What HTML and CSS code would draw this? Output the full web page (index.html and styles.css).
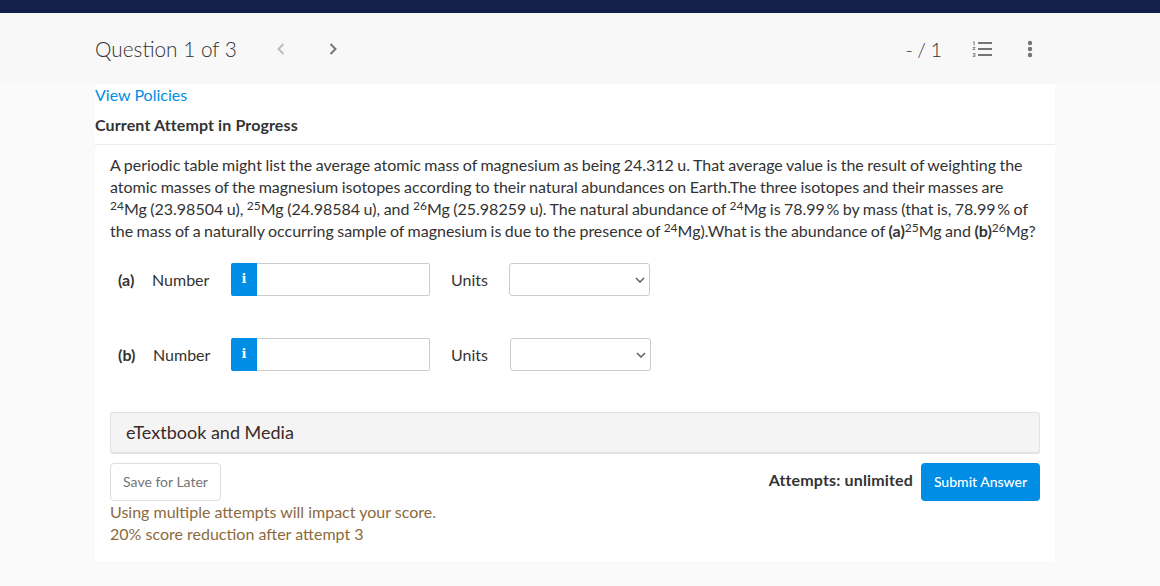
FILE: index.html
```html
<!DOCTYPE html>
<html lang="en">
<head>
<meta charset="utf-8">
<title>Question 1 of 3</title>
<link rel="stylesheet" href="styles.css">
</head>
<body>
<div class="topbar"></div>
<header class="qhead">
  <div class="qhead-inner">
    <h1 class="qtitle">Question 1 of 3</h1>
    <svg class="chev chev-off" width="10" height="14" viewBox="0 0 10 14"><path d="M7.5 2 2.5 7l5 5" fill="none" stroke="currentColor" stroke-width="2"/></svg>
    <svg class="chev chev-on" width="10" height="14" viewBox="0 0 10 14"><path d="M2.5 2l5 5-5 5" fill="none" stroke="currentColor" stroke-width="2"/></svg>
    <span class="score">- / 1</span>
    <svg class="list-icon" width="20" height="16" viewBox="0 0 20 16"><path d="M6 1h14v2H6zM6 7h14v2H6zM6 13h14v2H6z" fill="#757575"/><path d="M1 .5h1.600v4H1.700V1.400H1zM.7 6h2.600v.8L1.700 8.300h1.600V9H.7v-.7l1.600-1.600H.7zM.7 12h2.600v4H.7v-.7h1.800v-.9H1.200v-.6h1.300v-1H.7z" fill="#757575"/></svg>
    <svg class="dots-icon" width="6" height="18" viewBox="0 0 6 18"><circle cx="3" cy="3" r="2.200" fill="#757575"/><circle cx="3" cy="9" r="2.200" fill="#757575"/><circle cx="3" cy="15" r="2.200" fill="#757575"/></svg>
  </div>
</header>
<main class="card">
  <a class="policies" href="#">View Policies</a>
  <div class="attempt">Current Attempt in Progress</div>
  <div class="body">
    <p class="question">A periodic table might list the average atomic mass of magnesium as being 24.312 u. That average value is the result of weighting the atomic masses of the magnesium isotopes according to their natural abundances on Earth.The three isotopes and their masses are <sup>24</sup>Mg (23.98504 u), <sup>25</sup>Mg (24.98584 u), and <sup>26</sup>Mg (25.98259 u). The natural abundance of <sup>24</sup>Mg is <span class="pct">78.99 %</span> by mass (that is, <span class="pct">78.99 %</span> of the mass of a naturally occurring sample of magnesium is due to the presence of <sup>24</sup>Mg).What is the abundance of <b>(a)</b><sup>25</sup>Mg and <b>(b)</b><sup>26</sup>Mg?</p>
    <div class="part">
      <b class="part-label">(a)</b>
      <span class="num-label">Number</span>
      <span class="info">i</span>
      <input class="num-input" type="text" aria-label="Number a">
      <span class="units-label">Units</span>
      <select class="units" aria-label="Units a"><option></option></select>
    </div>
    <div class="part part-b">
      <b class="part-label">(b)</b>
      <span class="num-label">Number</span>
      <span class="info">i</span>
      <input class="num-input" type="text" aria-label="Number b">
      <span class="units-label">Units</span>
      <select class="units" aria-label="Units b"><option></option></select>
    </div>
    <div class="media">eTextbook and Media</div>
    <div class="actions">
      <div class="left-col">
        <button class="save" type="button">Save for Later</button>
      </div>
      <span class="attempts">Attempts: unlimited</span>
      <button class="submit" type="button">Submit Answer</button>
    </div>
    <p class="warning">Using multiple attempts will impact your score.<br>20% score reduction after attempt 3</p>
  </div>
</main>
</body>
</html>
```
FILE: styles.css
```css
* { box-sizing: border-box; }
html, body { margin: 0; padding: 0; }
body {
  height: 586px;
  overflow: hidden;
  background: #fafafa;
  font-family: "Lato", "Liberation Sans", sans-serif;
  font-size: 16px;
  color: #333;
}
.topbar { height: 13px; background: #13214a; }
.qhead { height: 71px; background: #f8f8f8; }
.qhead-inner {
  width: 960px;
  height: 71px;
  margin-left: 95px;
  display: flex;
  align-items: center;
}
.qtitle {
  margin: 0;
  font-size: 20.800px;
  font-weight: 300;
  color: #333;
  width: 181px;
}
.chev { display: block; }
.chev-off { color: #bdbdbd; }
.chev-on { color: #757575; margin-left: 42px; }
.score {
  margin-left: auto;
  font-size: 20px;
  font-weight: 300;
  color: #333;
  word-spacing: -1px;
}
.list-icon { margin-left: 30px; }
.dots-icon { margin-left: 35px; margin-right: 22px; }
.card {
  width: 960px;
  height: 477px;
  margin-left: 95px;
  background: #fff;
}
.policies {
  display: block;
  color: #008de6;
  text-decoration: none;
  line-height: 22px;
}
.attempt {
  height: 39px;
  padding-top: 7px;
  line-height: 24px;
  font-weight: 700;
  font-size: 16px;
  letter-spacing: 0.12px;
  border-bottom: 1px solid #ececec;
}
.body { padding: 9px 15px 0; }
.question {
  margin: 0;
  padding-right: 2px;
  line-height: 22px;
  font-size: 16px;
  letter-spacing: -0.01px;
  word-spacing: -0.6px;
}
.question sup {
  font-size: 12px;
  line-height: 0;
  vertical-align: 5px;
}
.pct { word-spacing: -2.5px; }
.part {
  display: flex;
  align-items: center;
  height: 33px;
  margin-top: 21px;
  padding-left: 8px;
}
.part-b { margin-top: 42px; }
.part-label { width: 34px; font-weight: 700; color: #333; }
.num-label { width: 79px; }
.info {
  width: 26px;
  height: 33px;
  background: #008de6;
  border-radius: 2px 0 0 2px;
  color: #fff;
  font-family: "DejaVu Serif", serif;
  font-weight: 700;
  font-size: 13px;
  line-height: 32px;
  text-align: center;
}
.num-input {
  width: 173px;
  height: 33px;
  border: 1px solid #ccc;
  border-left: 0;
  background: #fff;
  border-radius: 0 2px 2px 0;
  padding: 0 8px;
}
.units-label { margin-left: 21px; width: 58px; }
.units {
  appearance: none;
  width: 141px;
  height: 33px;
  border: 1px solid #ccc;
  border-radius: 3px;
  background: #fff url("data:image/svg+xml,%3Csvg xmlns='http://www.w3.org/2000/svg' width='10' height='6' viewBox='0 0 10 6'%3E%3Cpath d='M1 1l4 4 4-4' fill='none' stroke='%23666' stroke-width='1.600'/%3E%3C/svg%3E") no-repeat right 4px center;
}
.part-b .num-label { width: 78px; margin-left: 1px; }
.part-b .part-label { width: 34px; }
.part-b .units-label { width: 59px; }
.media {
  height: 42px;
  margin-top: 41px;
  padding-left: 15px;
  background: #f4f4f4;
  border: 1px solid #e2e2e2;
  border-bottom-width: 2px;
  border-radius: 3px;
  font-size: 18px;
  line-height: 38px;
  color: #3a2a2a;
}
.actions {
  display: flex;
  align-items: flex-start;
  margin-top: 9px;
  height: 38px;
}
.left-col { margin-right: auto; }
.save {
  width: 111px;
  height: 38px;
  background: #fff;
  border: 1px solid #ddd;
  border-radius: 4px;
  font-family: inherit;
  font-size: 14px;
  color: #757575;
  padding: 0 0 2px;
}
.attempts {
  font-weight: 700;
  line-height: 34px;
  letter-spacing: 0.15px;
  margin-right: 8px;
}
.submit {
  width: 119px;
  height: 38px;
  background: #008de6;
  border: 0;
  border-radius: 4px;
  color: #fff;
  font-family: inherit;
  font-size: 14px;
  font-weight: 500;
  padding: 0 0 2px;
}
.warning {
  margin: 0;
  line-height: 22px;
  color: #8b6a3e;
}
```
